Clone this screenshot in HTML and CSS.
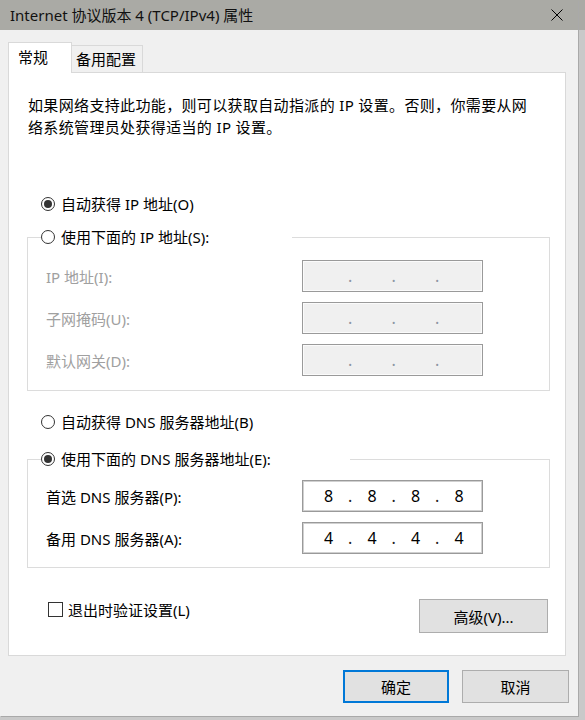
FILE: index.html
```html
<!DOCTYPE html>
<html lang="zh-CN">
<head>
<meta charset="utf-8">
<title>Internet 协议版本 4 (TCP/IPv4) 属性</title>
<link rel="stylesheet" href="styles.css">
</head>
<body>
<div class="window">
  <div class="titlebar">
    <span class="title">Internet 协议版本 4 (TCP/IPv4) 属性</span>
    <svg class="close" width="12" height="12" viewBox="0 0 12 12"><path d="M0.5 0.5 L11.5 11.5 M11.5 0.5 L0.5 11.5" stroke="#000" stroke-width="1" fill="none"/></svg>
  </div>
  <div class="tabs">
    <div class="tab active">常规</div>
    <div class="tab">备用配置</div>
  </div>
  <div class="panel">
    <p class="desc">如果网络支持此功能，则可以获取自动指派的 IP 设置。否则，你需要从网<br>络系统管理员处获得适当的 IP 设置。</p>
    <div class="option first"><span class="radio checked"></span><span>自动获得 IP 地址(O)</span></div>
    <fieldset class="group g1">
      <legend><span class="option"><span class="radio"></span><span>使用下面的 IP 地址(S):</span></span></legend>
      <div class="rows">
        <span class="lbl disabled">IP 地址(I):</span>
        <div class="ip disabled"><span class="seg"></span><span class="dot">.</span><span class="seg"></span><span class="dot">.</span><span class="seg"></span><span class="dot">.</span><span class="seg"></span></div>
        <span class="lbl disabled">子网掩码(U):</span>
        <div class="ip disabled"><span class="seg"></span><span class="dot">.</span><span class="seg"></span><span class="dot">.</span><span class="seg"></span><span class="dot">.</span><span class="seg"></span></div>
        <span class="lbl disabled">默认网关(D):</span>
        <div class="ip disabled"><span class="seg"></span><span class="dot">.</span><span class="seg"></span><span class="dot">.</span><span class="seg"></span><span class="dot">.</span><span class="seg"></span></div>
      </div>
    </fieldset>
    <div class="option third"><span class="radio"></span><span>自动获得 DNS 服务器地址(B)</span></div>
    <fieldset class="group g2">
      <legend><span class="option"><span class="radio checked"></span><span>使用下面的 DNS 服务器地址(E):</span></span></legend>
      <div class="rows">
        <span class="lbl">首选 DNS 服务器(P):</span>
        <div class="ip"><span class="seg">8</span><span class="dot">.</span><span class="seg">8</span><span class="dot">.</span><span class="seg">8</span><span class="dot">.</span><span class="seg">8</span></div>
        <span class="lbl">备用 DNS 服务器(A):</span>
        <div class="ip"><span class="seg">4</span><span class="dot">.</span><span class="seg">4</span><span class="dot">.</span><span class="seg">4</span><span class="dot">.</span><span class="seg">4</span></div>
      </div>
    </fieldset>
    <div class="bottom">
      <label class="check-row"><span class="checkbox"></span><span>退出时验证设置(L)</span></label>
      <button class="btn adv">高级(V)...</button>
    </div>
  </div>
  <div class="footer">
    <button class="btn primary">确定</button>
    <button class="btn">取消</button>
  </div>
</div>
</body>
</html>
```
FILE: styles.css
```css
html, body {
  margin: 0;
  padding: 0;
}
body {
  width: 585px;
  height: 720px;
  overflow: hidden;
  background: linear-gradient(#aaaaa5 0, #aaaaa5 30px, #c9c9c9 30px);
  font-family: "Segoe UI", "Noto Sans", "Noto Sans CJK SC", sans-serif;
  font-size: 15px;
  color: #000;
}
.window {
  width: 578px;
  height: 716px;
  background: #f0f0f0;
  display: flex;
  flex-direction: column;
  box-shadow: 1px 1px 0 #a9a9a9;
}
.titlebar {
  height: 30px;
  flex: none;
  background: #aaaaa5;
  display: flex;
  align-items: center;
  justify-content: space-between;
  padding: 0 15px 0 10px;
}
.title {
  line-height: 30px;
  color: #111;
}
.close {
  display: block;
}
.tabs {
  display: flex;
  align-items: flex-end;
  margin-top: 12px;
  padding-left: 8px;
  height: 30px;
  flex: none;
}
.tab {
  box-sizing: border-box;
  border: 1px solid #d9d9d9;
  border-bottom: none;
  width: 71px;
  height: 27px;
  padding-left: 4px;
  border-left: none;
  line-height: 26px;
  background: #f0f0f0;
}
.tab.active {
  width: 64px;
  height: 31px;
  margin-bottom: -1px;
  background: #fff;
  padding-left: 9px;
  border-left: 1px solid #d9d9d9;
  line-height: 29px;
  position: relative;
  z-index: 1;
}
.panel {
  box-sizing: border-box;
  margin-left: 8px;
  width: 558px;
  height: 584px;
  flex: none;
  background: #fff;
  border: 1px solid #d9d9d9;
  display: flex;
  flex-direction: column;
}
.desc {
  margin: 21px 0 0 19px;
  line-height: 22px;
  letter-spacing: 0.35px;
}
.option {
  display: flex;
  align-items: center;
  gap: 6px;
  height: 22px;
  line-height: 22px;
}
.option.first {
  margin: 55px 0 0 32px;
}
.option.third {
  margin: 20px 0 0 32px;
}
.radio {
  box-sizing: border-box;
  flex: none;
  width: 14px;
  height: 14px;
  border: 1px solid #333;
  border-radius: 50%;
  background: #fff;
  display: flex;
  align-items: center;
  justify-content: center;
}
.radio.checked::after {
  content: "";
  width: 8px;
  height: 8px;
  border-radius: 50%;
  background: #333;
}
.group {
  margin: 11px 15px 0 18px;
  padding: 12px 0 14px;
  border: 1px solid #dcdcdc;
  min-width: 0;
}
.group legend {
  padding: 0;
  margin-left: 13px;
  height: 22px;
}
.g1 legend {
  width: 251px;
}
.g2 {
  margin-top: 15px;
  padding: 10px 0 13px;
}
.g2 legend {
  width: 309px;
}
.rows {
  display: grid;
  grid-template-columns: 256px 181px;
  row-gap: 10px;
  padding-left: 18px;
  align-items: center;
}
.lbl.disabled {
  color: #a0a0a0;
}
.ip {
  box-sizing: border-box;
  height: 32px;
  border: 1px solid #9a9a9a;
  box-shadow: inset 0 0 0 1px #d0d0d0;
  display: flex;
  align-items: center;
  padding-left: 11px;
  background: #fff;
  font-size: 16px;
}
.ip.disabled {
  background: #f0f0f0;
  box-shadow: inset 0 0 0 1px #fbfbfb;
}
.seg {
  width: 29px;
  text-align: center;
}
.dot {
  width: 14.5px;
  text-align: center;
  color: #222;
}
.ip.disabled .dot {
  color: #8c95a3;
}
.bottom {
  display: flex;
  justify-content: space-between;
  align-items: flex-start;
  margin-top: 31px;
  padding: 0 17px 0 39px;
}
.check-row {
  display: flex;
  align-items: center;
  gap: 5px;
  height: 21px;
}
.checkbox {
  box-sizing: border-box;
  width: 15px;
  height: 15px;
  border: 1px solid #333;
  background: #fff;
}
.btn {
  font: inherit;
  box-sizing: border-box;
  background: #e1e1e1;
  border: 1px solid #adadad;
  color: #000;
  padding: 0;
}
.adv {
  width: 129px;
  height: 34px;
}
.footer {
  display: flex;
  justify-content: flex-end;
  gap: 13px;
  margin-top: 14px;
  padding-right: 9px;
}
.footer .btn {
  width: 107px;
  height: 33px;
}
.footer .btn.primary {
  width: 106px;
  border: 2px solid #0078d7;
}
```
